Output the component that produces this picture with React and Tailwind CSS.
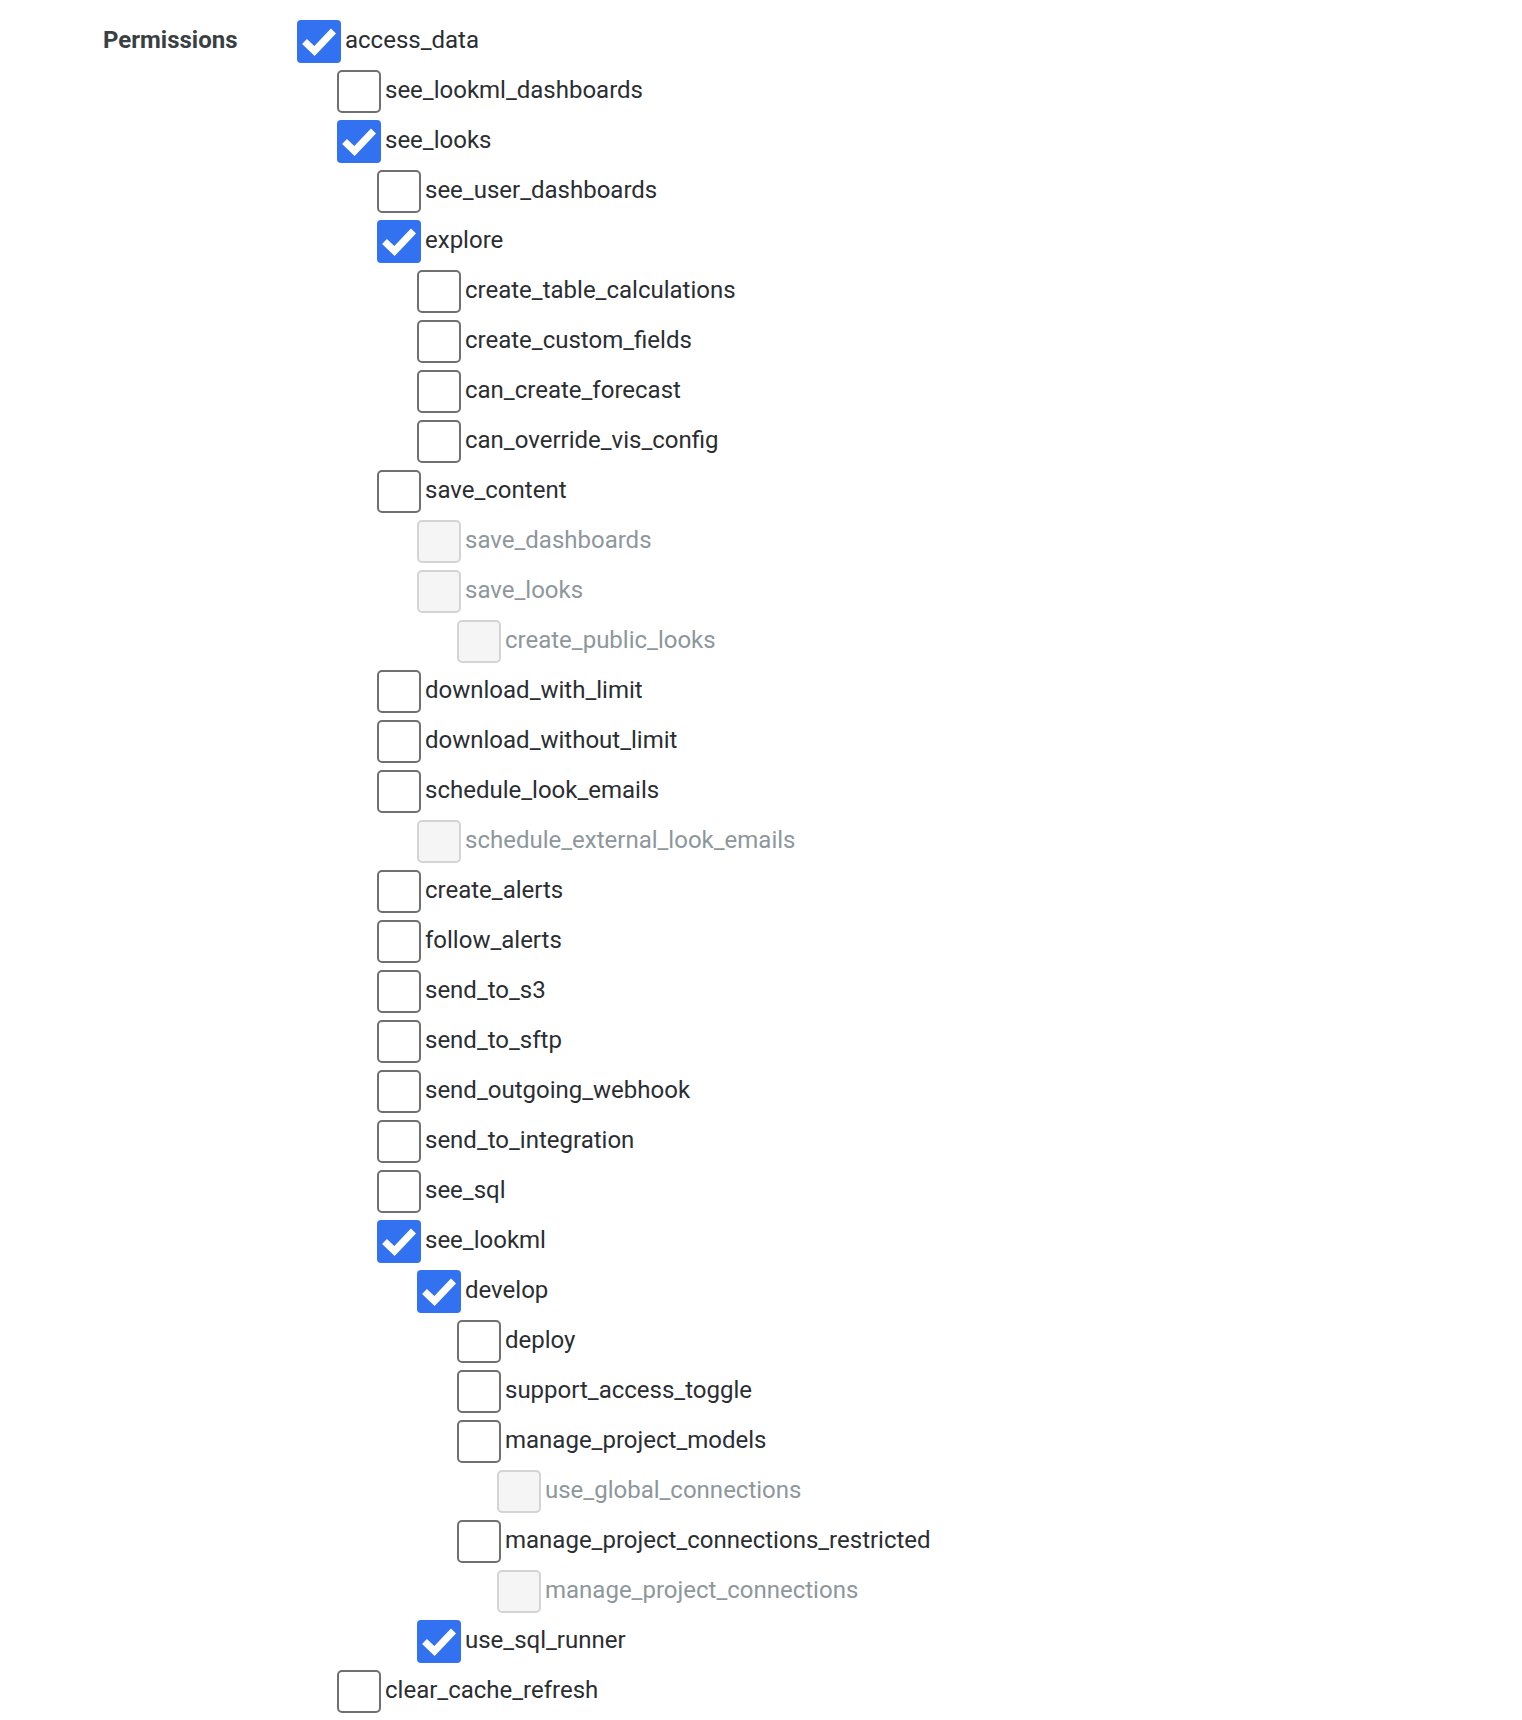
import React from "react";

const tree = [
  {
    n: "access_data", c: true, k: [
      { n: "see_lookml_dashboards" },
      {
        n: "see_looks", c: true, k: [
          { n: "see_user_dashboards" },
          {
            n: "explore", c: true, k: [
              { n: "create_table_calculations" },
              { n: "create_custom_fields" },
              { n: "can_create_forecast" },
              { n: "can_override_vis_config" },
            ],
          },
          {
            n: "save_content", k: [
              { n: "save_dashboards", d: true },
              { n: "save_looks", d: true, k: [{ n: "create_public_looks", d: true }] },
            ],
          },
          { n: "download_with_limit" },
          { n: "download_without_limit" },
          { n: "schedule_look_emails", k: [{ n: "schedule_external_look_emails", d: true }] },
          { n: "create_alerts" },
          { n: "follow_alerts" },
          { n: "send_to_s3" },
          { n: "send_to_sftp" },
          { n: "send_outgoing_webhook" },
          { n: "send_to_integration" },
          { n: "see_sql" },
          {
            n: "see_lookml", c: true, k: [
              {
                n: "develop", c: true, k: [
                  { n: "deploy" },
                  { n: "support_access_toggle" },
                  { n: "manage_project_models", k: [{ n: "use_global_connections", d: true }] },
                  { n: "manage_project_connections_restricted", k: [{ n: "manage_project_connections", d: true }] },
                ],
              },
              { n: "use_sql_runner", c: true },
            ],
          },
        ],
      },
      { n: "clear_cache_refresh" },
    ],
  },
];

function Box({ checked, disabled }) {
  if (checked) {
    return (
      <div className="w-[44px] h-[43px] shrink-0 rounded-[4px] bg-[#3272f0] flex items-center justify-center">
        <svg width="44" height="43" viewBox="0 0 44 43">
          <polyline
            points="7.5,21.5 17.5,31 36.5,11"
            fill="none"
            stroke="#ffffff"
            strokeWidth="7"
            strokeLinecap="butt"
            strokeLinejoin="miter"
          />
        </svg>
      </div>
    );
  }
  if (disabled) {
    return <div className="w-[44px] h-[43px] shrink-0 rounded-[5px] border-2 border-[#d4d4d4] bg-[#f5f5f5]" />;
  }
  return <div className="w-[44px] h-[43px] shrink-0 rounded-[5px] border-2 border-[#707070] bg-white" />;
}

function Node({ node }) {
  return (
    <div className="flex flex-col gap-[7px]">
      <div className="flex items-center h-[43px] gap-[4px]">
        <Box checked={node.c} disabled={node.d} />
        <span className={node.d ? "pb-[4px] text-[#8d979c]" : "pb-[4px] text-[#2a2e32]"}>{node.n}</span>
      </div>
      {node.k && (
        <div className="flex flex-col gap-[7px] pl-[40px]">
          {node.k.map((ch) => (
            <Node key={ch.n} node={ch} />
          ))}
        </div>
      )}
    </div>
  );
}

export default function App() {
  return (
    <div
      className="min-h-[1720px] w-full bg-white flex pt-[20px] pl-[103px] text-[24px] leading-[28px]"
      style={{ fontFamily: "Roboto, 'Liberation Sans', sans-serif" }}
    >
      <div className="w-[194px] h-[43px] flex items-center shrink-0">
        <span className="pb-[4px] font-bold text-[#3a3f44]">Permissions</span>
      </div>
      <div className="flex flex-col gap-[7px]">
        {tree.map((t) => (
          <Node key={t.n} node={t} />
        ))}
      </div>
    </div>
  );
}
